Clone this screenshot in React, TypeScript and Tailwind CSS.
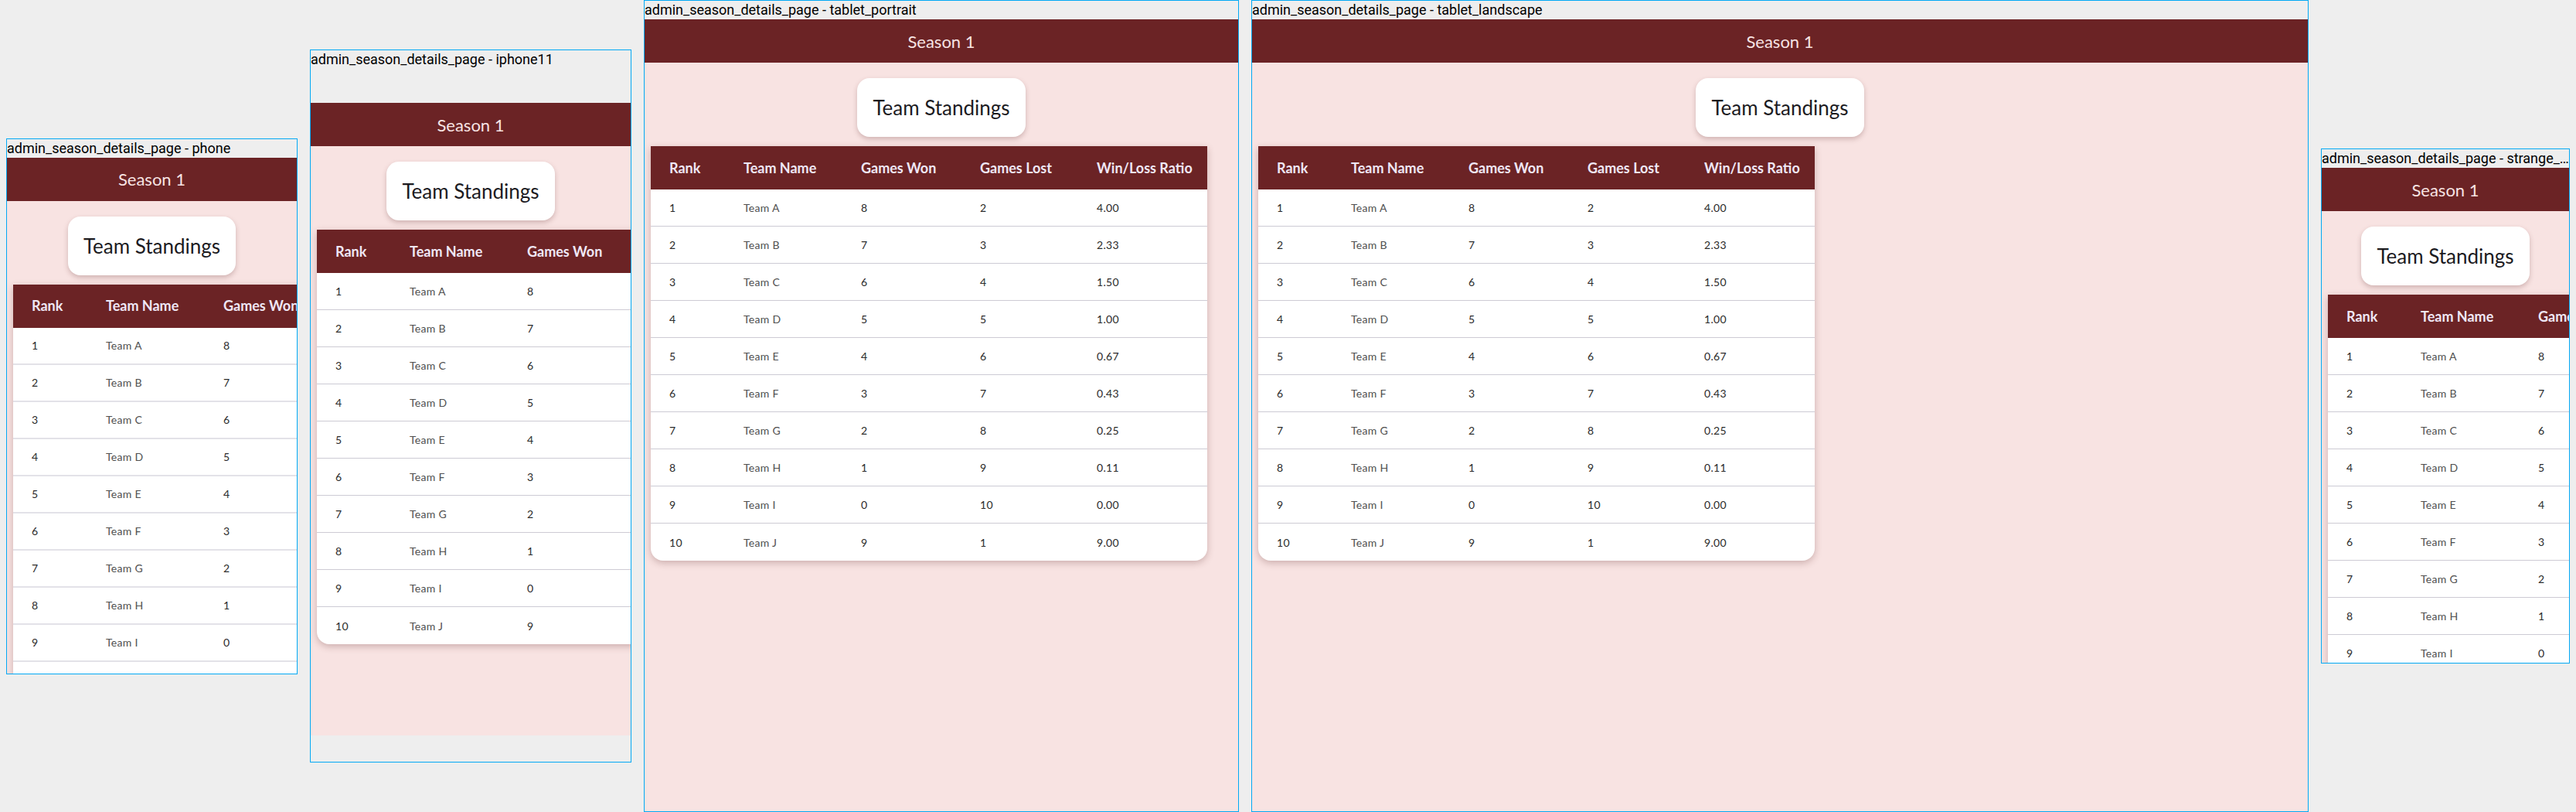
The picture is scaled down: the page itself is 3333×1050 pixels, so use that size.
import React from "react";

const teams = [
  { rank: 1, name: "Team A", won: 8, lost: 2, ratio: "4.00" },
  { rank: 2, name: "Team B", won: 7, lost: 3, ratio: "2.33" },
  { rank: 3, name: "Team C", won: 6, lost: 4, ratio: "1.50" },
  { rank: 4, name: "Team D", won: 5, lost: 5, ratio: "1.00" },
  { rank: 5, name: "Team E", won: 4, lost: 6, ratio: "0.67" },
  { rank: 6, name: "Team F", won: 3, lost: 7, ratio: "0.43" },
  { rank: 7, name: "Team G", won: 2, lost: 8, ratio: "0.25" },
  { rank: 8, name: "Team H", won: 1, lost: 9, ratio: "0.11" },
  { rank: 9, name: "Team I", won: 0, lost: 10, ratio: "0.00" },
  { rank: 10, name: "Team J", won: 9, lost: 1, ratio: "9.00" },
];

const headers = ["Rank", "Team Name", "Games Won", "Games Lost", "Win/Loss Ratio"];

interface StandingsTableProps {
  /** phone renders slightly thicker, lighter separators */
  thickLines?: boolean;
}

const StandingsTable = ({ thickLines = false }: StandingsTableProps) => {
  const line = thickLines ? "border-b-2 border-[#e3e2e8]" : "border-b border-[#cdcbd4]";
  return (
    <div className="ml-2 mt-3 w-[720px] shrink-0 rounded-b-2xl bg-white shadow-[0_3px_10px_rgba(90,40,40,0.28)]">
      {/* Header row */}
      <div className="grid h-14 grid-cols-[120px_152px_154px_151px_143px] items-center bg-[#6b2325] text-[18px] font-bold text-[#efe7f5]">
        {headers.map((h, i) => (
          <div key={h} className={i === 0 ? "pl-6 whitespace-nowrap" : "whitespace-nowrap"}>
            {h}
          </div>
        ))}
      </div>

      {/* Data rows */}
      {teams.map((t, i) => (
        <div
          key={t.rank}
          className={`grid h-12 grid-cols-[120px_152px_154px_151px_143px] items-center text-[14px] tracking-[0.02em] ${
            i < teams.length - 1 ? line : ""
          }`}
        >
          <div className="pl-6 text-[#2b2b2b]">{t.rank}</div>
          <div className="text-[#4f4f4f]">{t.name}</div>
          <div className="text-[#2b2b2b]">{t.won}</div>
          <div className="text-[#2b2b2b]">{t.lost}</div>
          <div className="text-[#2b2b2b]">{t.ratio}</div>
        </div>
      ))}
    </div>
  );
};

interface AppScreenProps {
  thickLines?: boolean;
}

const AppScreen = ({ thickLines }: AppScreenProps) => (
  <div className="flex h-full flex-col overflow-hidden bg-[#f8e3e2] font-['Lato',sans-serif]">
    {/* App bar */}
    <div className="flex h-14 shrink-0 items-center justify-center bg-[#6b2325] text-[22px] text-[#f7e3e3]">
      Season 1
    </div>

    {/* Title card */}
    <div className="mt-5 self-center whitespace-nowrap rounded-2xl bg-white px-5 py-5 text-[26px] leading-9 text-[#1c1b1f] shadow-[0_3px_6px_rgba(90,40,40,0.25)]">
      Team Standings
    </div>

    <StandingsTable thickLines={thickLines} />
  </div>
);

interface DeviceFrameProps {
  label: string;
  frameWidth: string;
  screenHeight: string;
  safeArea?: boolean;
  thickLines?: boolean;
}

const DeviceFrame = ({ label, frameWidth, screenHeight, safeArea = false, thickLines }: DeviceFrameProps) => (
  <div className={`flex shrink-0 flex-col border border-[#03a9f4] ${frameWidth}`}>
    <div className="h-6 truncate font-['Roboto',sans-serif] text-[18px] leading-6 text-black">{label}</div>
    <div className={`${screenHeight} ${safeArea ? "pt-[44px] pb-[34px]" : ""}`}>
      <AppScreen thickLines={thickLines} />
    </div>
  </div>
);

export default function App() {
  return (
    <div className="flex h-[1050px] w-[3333px] items-center gap-4 overflow-hidden bg-[#eeeeee] pl-2">
      <DeviceFrame
        label="admin_season_details_page - phone"
        frameWidth="w-[377px]"
        screenHeight="h-[667px]"
        thickLines
      />
      <DeviceFrame
        label="admin_season_details_page - iphone11"
        frameWidth="w-[416px]"
        screenHeight="h-[896px]"
        safeArea
      />
      <DeviceFrame
        label="admin_season_details_page - tablet_portrait"
        frameWidth="w-[770px]"
        screenHeight="h-[1024px]"
      />
      <DeviceFrame
        label="admin_season_details_page - tablet_landscape"
        frameWidth="w-[1368px]"
        screenHeight="h-[1024px]"
      />
      <DeviceFrame
        label="admin_season_details_page - strange_device"
        frameWidth="w-[322px]"
        screenHeight="h-[640px]"
      />
    </div>
  );
}
